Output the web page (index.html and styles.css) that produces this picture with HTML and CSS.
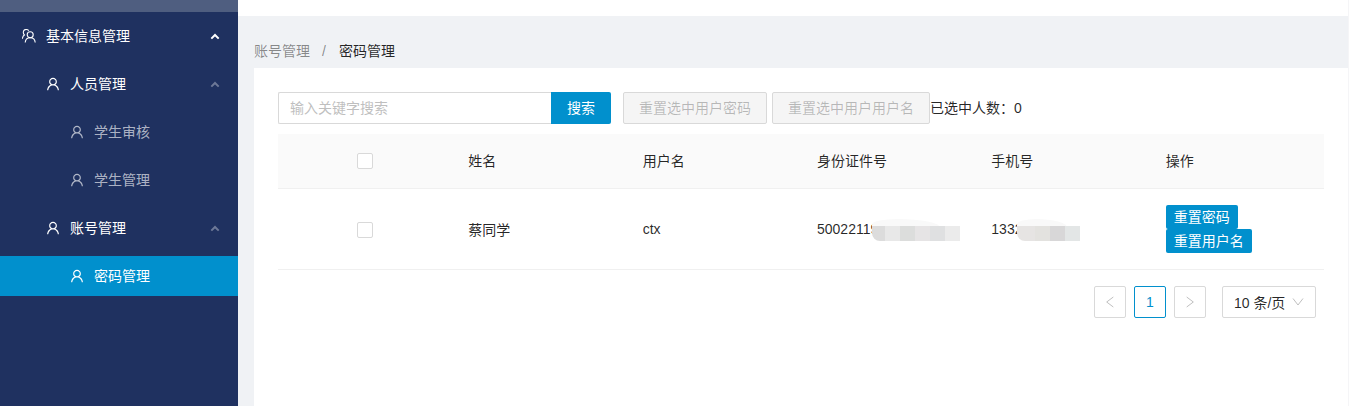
FILE: index.html
```html
<!DOCTYPE html>
<html lang="zh">
<head>
<meta charset="utf-8">
<title>密码管理</title>
<link rel="stylesheet" href="styles.css">
</head>
<body>
<svg class="defs" width="0" height="0">
  <symbol id="user" viewBox="64 64 896 896"><path fill="currentColor" d="M858.5 763.6a374 374 0 0 0-80.6-119.5 375.63 375.63 0 0 0-119.5-80.6c-.4-.2-.8-.3-1.2-.5C719.5 518 760 444.7 760 362c0-137-111-248-248-248S264 225 264 362c0 82.7 40.5 156 102.8 201.1-.4.2-.8.3-1.2.5-44.8 18.9-85 46-119.5 80.6a375.63 375.63 0 0 0-80.6 119.5A371.7 371.7 0 0 0 136 901.8a8 8 0 0 0 8 8.2h60c4.4 0 7.9-3.5 8-7.8 2-77.2 33-149.5 87.8-204.3 56.7-56.7 132-87.9 212.2-87.9s155.5 31.2 212.2 87.9C779 752.7 810 825 812 902.2c.1 4.4 3.6 7.8 8 7.8h60a8 8 0 0 0 8-8.2c-1-47.8-10.9-94.3-29.5-138.2zM512 534c-45.9 0-89.1-17.9-121.6-50.4S340 407.9 340 362c0-45.9 17.9-89.1 50.4-121.6S466.1 190 512 190s89.1 17.9 121.6 50.4S684 316.1 684 362c0 45.9-17.9 89.1-50.4 121.6S557.9 534 512 534z"/></symbol>
  <symbol id="team" viewBox="0 0 14 14"><g fill="none" stroke="currentColor" stroke-width="1.1"><circle cx="8.2" cy="5.8" r="3"/><path d="M3.200 13.500c.2-3 2.300-4.800 5-4.800s4.800 1.800 5 4.800"/><path d="M6.800 1.700C6.200.9 5.300.5 4.400.5 2.700.5 1.300 1.900 1.300 3.600c0 1 .4 1.800 1.100 2.400C1.200 6.700.5 8.100.4 9.800"/></g></symbol>
  <symbol id="up" viewBox="0 0 10 7"><path fill="none" stroke="currentColor" stroke-width="2" d="M1.300 5.600 5 2l3.700 3.600"/></symbol>
</svg>
<div class="app">
  <aside class="sidebar">
    <div class="logo-strip"></div>
    <nav class="menu">
      <a class="item lvl1"><svg class="ico"><use href="#team"/></svg><span class="label">基本信息管理</span><svg class="arrow"><use href="#up"/></svg></a>
      <a class="item lvl2"><svg class="ico"><use href="#user"/></svg><span class="label">人员管理</span><svg class="arrow dim"><use href="#up"/></svg></a>
      <a class="item lvl3"><svg class="ico"><use href="#user"/></svg><span class="label">学生审核</span></a>
      <a class="item lvl3"><svg class="ico"><use href="#user"/></svg><span class="label">学生管理</span></a>
      <a class="item lvl2"><svg class="ico"><use href="#user"/></svg><span class="label">账号管理</span><svg class="arrow dim"><use href="#up"/></svg></a>
      <a class="item lvl3 active"><svg class="ico"><use href="#user"/></svg><span class="label">密码管理</span></a>
    </nav>
  </aside>
  <main class="main">
    <header class="topbar"></header>
    <div class="crumbs"><span class="crumb">账号管理</span><span class="sep">/</span><span class="crumb-now">密码管理</span></div>
    <section class="panel">
      <div class="toolbar">
        <div class="search"><input class="search-input" placeholder="输入关键字搜索"><button class="search-btn">搜索</button></div>
        <button class="btn-off">重置选中用户密码</button>
        <button class="btn-off">重置选中用户用户名</button>
        <span class="count">已选中人数：0</span>
      </div>
      <table class="grid">
        <thead>
          <tr><th class="check-cell"><span class="check"></span></th><th>姓名</th><th>用户名</th><th>身份证件号</th><th>手机号</th><th>操作</th></tr>
        </thead>
        <tbody>
          <tr>
            <td class="check-cell"><span class="check"></span></td>
            <td>蔡同学</td>
            <td>ctx</td>
            <td><span class="masked">50022119<span class="mosaic m-id"><i class="c1"></i><i class="c2"></i><i class="c3"></i><i class="c4"></i><i class="c5"></i><i class="c6"></i></span></span></td>
            <td><span class="masked">1332<span class="mosaic m-ph"><i class="p1"></i><i class="p2"></i><i class="p3"></i><i class="p4"></i></span></span></td>
            <td class="ops"><a class="op">重置密码</a><a class="op">重置用户名</a></td>
          </tr>
        </tbody>
      </table>
      <div class="pager">
        <span class="page"><svg width="12" height="12" viewBox="0 0 12 12"><path fill="none" stroke="currentColor" d="M9.300 1 2.700 6l6.600 5"/></svg></span>
        <span class="page current">1</span>
        <span class="page"><svg width="12" height="12" viewBox="0 0 12 12"><path fill="none" stroke="currentColor" d="M2.700 1l6.600 5-6.600 5"/></svg></span>
        <span class="size">10 条/页<svg width="12" height="12" viewBox="0 0 12 12"><path fill="none" stroke="#bfbfbf" d="M1 2.500l5 6.500 5-6.500"/></svg></span>
      </div>
    </section>
  </main>
</div>
</body>
</html>
```
FILE: styles.css
```css
* { box-sizing: border-box; }
html, body { margin: 0; height: 100%; overflow: hidden; }
body {
  font-family: "Liberation Sans", "Noto Sans CJK SC", sans-serif;
  font-size: 14px;
  color: rgba(0, 0, 0, .85);
  background: #f0f2f5;
}
.defs { position: absolute; }
.app { display: flex; height: 406px; }

.sidebar { width: 238px; flex: none; background: #1f3160; color: #fff; }
.logo-strip { height: 12px; background: #4f5e80; }
.menu { display: flex; flex-direction: column; gap: 8px; padding-top: 4px; }
.item { display: flex; align-items: center; height: 40px; padding-right: 18px; color: #fff; }
.lvl1 { padding-left: 22px; }
.lvl2 { padding-left: 46px; }
.lvl3 { padding-left: 70px; color: rgba(255, 255, 255, .65); }
.active { background: #0190cd; color: #fff; }
.ico { width: 14px; height: 14px; margin-right: 10px; flex: none; }
.label { flex: 1; line-height: 22px; }
.arrow { width: 10px; height: 7px; flex: none; color: #fff; }
.arrow.dim { color: rgba(255, 255, 255, .35); }

.main { flex: 1; min-width: 0; display: flex; flex-direction: column; border-right: 1px solid #f5f5f7; }
.topbar { height: 16px; background: #fff; flex: none; }
.crumbs { height: 52px; flex: none; padding: 24px 0 0 16px; line-height: 22px; color: rgba(0, 0, 0, .45); }
.sep { margin: 0 13px 0 12px; }
.crumb-now { color: rgba(0, 0, 0, .85); }
.panel { flex: 1; margin-left: 16px; background: #fff; padding: 24px 24px 0 24px; }

.toolbar { display: flex; align-items: center; height: 32px; }
.search { display: flex; width: 333px; height: 32px; margin-right: 12px; }
.search-input {
  flex: 1; min-width: 0; height: 32px; padding: 0 11px; border: 1px solid #d9d9d9; border-right: 0;
  border-radius: 2px 0 0 2px; font: inherit; outline: none;
}
.search-input::placeholder { color: #bfbfbf; }
.search-btn {
  width: 60px; height: 32px; border: 0; border-radius: 0 2px 2px 0; background: #0190cd; color: #fff; font: inherit; padding: 0 0 2px;
}
.btn-off {
  height: 32px; padding: 0 15px 2px; margin-right: 5px; border: 1px solid #d9d9d9; border-radius: 2px;
  background: #f5f5f5; color: rgba(0, 0, 0, .25); font: inherit;
}
.btn-off + .btn-off { margin-right: 0; }
.count { white-space: nowrap; padding-bottom: 2px; }

.grid { width: 1046px; margin-top: 10px; border-collapse: separate; border-spacing: 0; table-layout: fixed; }
.grid th { height: 55px; padding: 0 16px 2px; background: #fafafa; font-weight: 400; text-align: left; border-bottom: 1px solid #f0f0f0; }
.grid td { height: 81px; padding: 16px; border-bottom: 1px solid #f0f0f0; }
.grid .check-cell { text-align: center; }
.check { display: inline-block; width: 16px; height: 16px; vertical-align: middle; border: 1px solid #d9d9d9; border-radius: 2px; background: #fff; }
.masked { position: relative; white-space: nowrap; }
.mosaic { position: absolute; top: -2px; height: 22px; display: flex; align-items: flex-end; filter: blur(.3px); }
.mosaic::before { content: ""; position: absolute; left: 0; top: 0; width: 68px; height: 14px; border-radius: 50% 80% 0 0; background: #f9f9f9; }
.m-ph::before { width: 50px; }
.mosaic i { position: relative; display: block; width: 15px; height: 15px; }
.m-id { left: 55px; }
.m-ph { left: 26px; }
.mosaic i:first-child { border-radius: 0 0 0 8px; }
.m-id .c1 { width: 13px; }
.m-ph .p1 { width: 18px; }
.c1 { background: #dcdcdc; }
.c2 { background: #e8e8e8; }
.c3 { background: #dcdddc; }
.c4 { background: #e6e4e5; }
.c5 { background: #dfe0e1; }
.c6 { background: #ebebeb; }
.p1 { background: #e6e4e3; }
.p2 { background: #e3e2df; }
.p3 { background: #d8d7d8; }
.p4 { background: #e3e6e6; }
.ops { line-height: 24px; }
.op {
  display: block; width: fit-content; height: 24px; padding: 0 8px; background: #0190cd; color: #fff; border-radius: 2px; white-space: nowrap;
}

.pager { display: flex; justify-content: flex-end; align-items: center; margin-top: 16px; padding-right: 8px; gap: 8px; }
.page {
  display: flex; align-items: center; justify-content: center; width: 32px; height: 32px;
  border: 1px solid #d9d9d9; border-radius: 2px; color: #bfbfbf;
}
.page.current { border-color: #0190cd; color: #0190cd; font-weight: 500; }
.size {
  display: flex; align-items: center; justify-content: space-between; width: 94px; height: 32px; margin-left: 8px;
  padding: 0 11px; border: 1px solid #d9d9d9; border-radius: 2px;
}
```
